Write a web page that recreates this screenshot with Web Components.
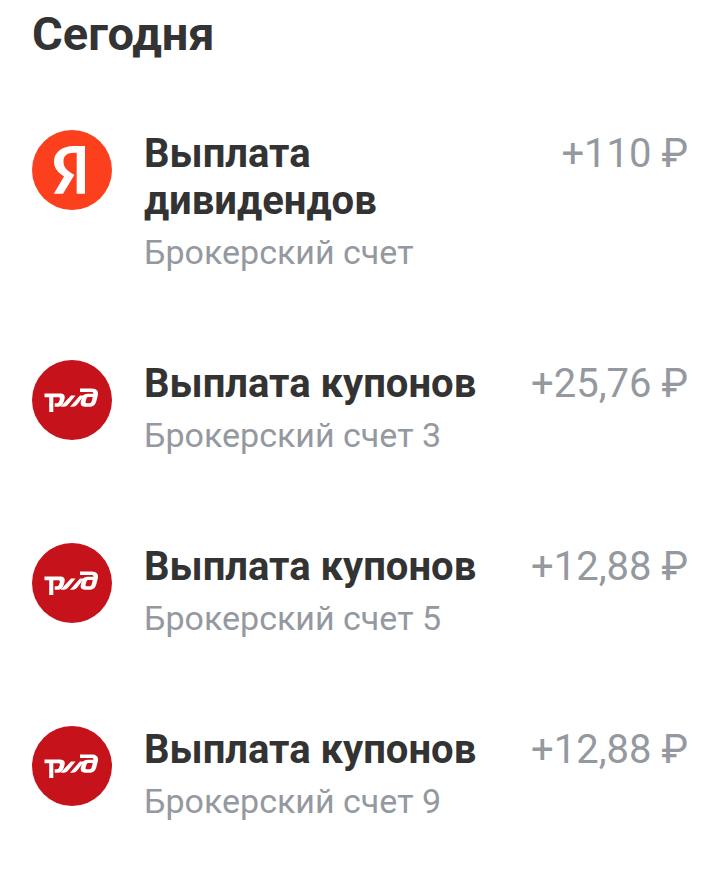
<!DOCTYPE html>
<html lang="ru">
<head>
<meta charset="utf-8">
<meta name="viewport" content="width=device-width, initial-scale=1">
<title>Сегодня</title>
<style>
  body {
    margin: 0;
    background: #ffffff;
    font-family: Roboto, "Liberation Sans", sans-serif;
  }
</style>
</head>
<body>

<operation-list heading="Сегодня">
  <operation-item amount="+110 ₽">
    <company-logo slot="logo" name="yandex"></company-logo>
    Выплата дивидендов
    <span slot="account">Брокерский счет</span>
  </operation-item>
  <operation-item amount="+25,76 ₽">
    <company-logo slot="logo" name="rzd"></company-logo>
    Выплата купонов
    <span slot="account">Брокерский счет 3</span>
  </operation-item>
  <operation-item amount="+12,88 ₽">
    <company-logo slot="logo" name="rzd"></company-logo>
    Выплата купонов
    <span slot="account">Брокерский счет 5</span>
  </operation-item>
  <operation-item amount="+12,88 ₽">
    <company-logo slot="logo" name="rzd"></company-logo>
    Выплата купонов
    <span slot="account">Брокерский счет 9</span>
  </operation-item>
</operation-list>

<script>
const LOGOS = {
  yandex: {
    label: 'Яндекс',
    color: '#fc3f1d',
    shape: '<path fill="#ffffff" d="M53 16H42C29.500 16 22 22.500 22 31.500C22 38 25.500 42 32 46.500L21.800 63.700H31L42.300 45L38.500 42.500C33.500 39 31.500 36.500 31.500 31C31.500 26 35 22.800 42 22.800H44.700V63.700H53Z"/>'
  },
  rzd: {
    label: 'РЖД',
    color: '#c6131b',
    shape: `
      <g fill="#ffffff">
        <path d="M12.500 33.500H27.500C32 33.500 33.500 35.500 32.500 39L31.800 41.500C30.800 45 29 46.700 25.500 46.700H22.700V43.300H24C26 43.300 26.800 42.500 27.300 41L27.800 39.200C28.200 37.800 27.500 37.200 26 37.200H21.300V52H17.200V37.200H12.500Z"/>
        <path d="M28.500 46.700L39 35.500H43.500L37 43.500C35.300 45.900 34 46.700 31.500 46.700Z"/>
        <path d="M38 46.700L48 35.500H52L46 43.500C44.300 45.900 43 46.700 40.500 46.700Z"/>
        <path fill-rule="evenodd" d="M48 28.500H59.500C65 28.500 66.800 31.500 65.800 35.500L64.300 41.200C63.300 45 61 46.700 57 46.700H53C49.300 46.700 48 44.500 49 41L50.200 37.500C51.100 34.500 53 33.700 56 33.700H61.500C61.600 32.500 60.800 32 59.500 32H48ZM60.800 37H56.500C55.300 37 54.800 37.500 54.400 38.700L53.700 41.200C53.300 42.500 53.600 43.200 54.800 43.200H57C58.500 43.200 59.300 42.600 59.700 41.200Z"/>
      </g>`
  }
};

class CompanyLogo extends HTMLElement {

  constructor() {
    super();

    this.attachShadow({mode: 'open'});
  }

  connectedCallback() {
    const logo = LOGOS[this.getAttribute('name')];

    this.shadowRoot.innerHTML = `
      <style>
        :host {
          display: block;
          width: 80px;
          height: 80px;
        }

        svg {
          display: block;
          width: 100%;
          height: 100%;
        }
      </style>

      <svg viewBox="0 0 80 80" role="img" aria-label="${logo.label}">
        <circle cx="40" cy="40" r="40" fill="${logo.color}"/>
        ${logo.shape}
      </svg>
    `;
  }
}

class OperationItem extends HTMLElement {

  static get observedAttributes() {
    return ['amount'];
  }

  constructor() {
    super();

    const shadowRoot = this.attachShadow({mode: 'open'});

    shadowRoot.innerHTML = `
      <style>
        :host {
          display: flex;
          align-items: flex-start;
          gap: 32px;
        }

        slot[name="logo"] {
          display: block;
          flex: none;
        }

        #details {
          flex: 1;
          min-width: 0;
          display: flex;
          flex-direction: column;
          gap: 8px;
        }

        #title {
          color: #333333;
          font-size: 40px;
          font-weight: 700;
          line-height: 47px;
        }

        #account {
          color: #9499a0;
          font-size: 34px;
          line-height: 40px;
        }

        #amount {
          flex: none;
          color: #9499a0;
          font-size: 40px;
          line-height: 47px;
          white-space: nowrap;
        }
      </style>

      <slot name="logo"></slot>
      <div id="details">
        <div id="title"><slot></slot></div>
        <div id="account"><slot name="account"></slot></div>
      </div>
      <span id="amount"></span>
    `;

    this.amount = this.shadowRoot.querySelector('#amount');
  }

  connectedCallback() {
    this.setAttribute('role', 'listitem');
  }

  attributeChangedCallback(attr, oldValue, value) {
    if(attr === 'amount') {
      this.amount.textContent = value;
    }
  }
}

class OperationList extends HTMLElement {

  constructor() {
    super();

    const shadowRoot = this.attachShadow({mode: 'open'});

    shadowRoot.innerHTML = `
      <style>
        :host {
          display: block;
          padding: 6px 32px 48px;
        }

        h2 {
          margin: 0 0 68px;
          color: #333333;
          font-size: 47px;
          font-weight: 700;
          line-height: 56px;
        }

        #items {
          display: flex;
          flex-direction: column;
          gap: 88px;
        }
      </style>

      <h2></h2>
      <div id="items" role="list"><slot></slot></div>
    `;
  }

  connectedCallback() {
    this.shadowRoot.querySelector('h2').textContent = this.getAttribute('heading');
  }
}

customElements.define('company-logo', CompanyLogo);
customElements.define('operation-item', OperationItem);
customElements.define('operation-list', OperationList);
</script>
</body>
</html>
